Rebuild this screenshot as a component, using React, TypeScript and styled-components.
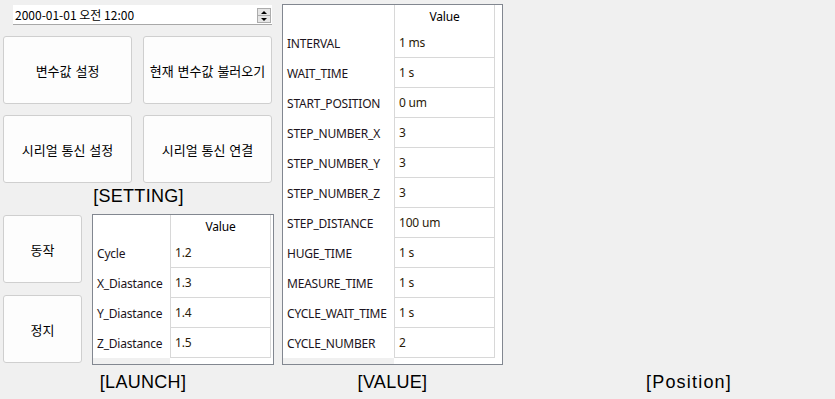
import styled, { createGlobalStyle } from 'styled-components'

const GlobalStyle = createGlobalStyle`
	html, body {
		margin: 0;
		padding: 0;
		background: #f0f0f0;
	}
	#root {
		width: 835px;
		height: 399px;
		overflow: hidden;
	}
`

interface Row {
	name: string
	value: string
}

const launchRows: Row[] = [
	{ name: 'Cycle', value: '1.2' },
	{ name: 'X_Diastance', value: '1.3' },
	{ name: 'Y_Diastance', value: '1.4' },
	{ name: 'Z_Diastance', value: '1.5' },
]

const valueRows: Row[] = [
	{ name: 'INTERVAL', value: '1 ms' },
	{ name: 'WAIT_TIME', value: '1 s' },
	{ name: 'START_POSITION', value: '0 um' },
	{ name: 'STEP_NUMBER_X', value: '3' },
	{ name: 'STEP_NUMBER_Y', value: '3' },
	{ name: 'STEP_NUMBER_Z', value: '3' },
	{ name: 'STEP_DISTANCE', value: '100 um' },
	{ name: 'HUGE_TIME', value: '1 s' },
	{ name: 'MEASURE_TIME', value: '1 s' },
	{ name: 'CYCLE_WAIT_TIME', value: '1 s' },
	{ name: 'CYCLE_NUMBER', value: '2' },
]

const Page = styled.div`
	display: flex;
	width: 835px;
	height: 399px;
	background: #f0f0f0;
`

const SettingColumn = styled.div`
	display: flex;
	flex-direction: column;
	width: 271px;
	margin-left: 3px;
`

const ValueColumn = styled.div`
	display: flex;
	flex-direction: column;
	width: 221px;
	margin-left: 8px;
	padding-top: 4px;
`

const PositionColumn = styled.div`
	flex: 1;
	display: flex;
	flex-direction: column;
	justify-content: flex-end;
	padding-left: 40px;
`

const DatePicker = styled.div`
	display: flex;
	align-items: center;
	justify-content: space-between;
	box-sizing: border-box;
	width: 259px;
	height: 20px;
	margin: 5px 0 0 10px;
	padding: 0 1px 0 2px;
	background: #fff;
	border-bottom: 1px solid #a8a8a8;
	font-family: 'Noto Sans CJK KR', sans-serif;
	font-size: 12px;
	color: #000;
`

const Spinner = styled.div`
	display: flex;
	flex-direction: column;
	width: 14px;
	height: 15px;
	margin-top: 2px;
`

const SpinButton = styled.div<{ $down?: boolean }>`
	flex: 1;
	display: flex;
	align-items: center;
	justify-content: center;
	box-sizing: border-box;
	background: #e6e6e6;
	border: 1px solid #acacac;
	border-top-width: ${p => (p.$down ? '0' : '1px')};

	&::after {
		content: '';
		border-left: 3px solid transparent;
		border-right: 3px solid transparent;
		${p =>
			p.$down
				? 'border-top: 3px solid #000;'
				: 'border-bottom: 3px solid #000;'}
	}
`

const ButtonGrid = styled.div`
	display: grid;
	grid-template-columns: 129px 129px;
	grid-auto-rows: 68px;
	column-gap: 11px;
	row-gap: 11px;
	margin-top: 11px;
`

const Button = styled.div`
	display: flex;
	align-items: center;
	justify-content: center;
	box-sizing: border-box;
	background: #fdfdfd;
	border: 1px solid #cfcfcf;
	border-radius: 3px;
	font-family: 'Noto Sans CJK KR', sans-serif;
	font-size: 13px;
	word-spacing: 1px;
	color: #000;
`

const SectionLabel = styled.div<{
	$height: number
	$line: number
	$shift?: number
	$spacing?: number
}>`
	height: ${p => p.$height}px;
	line-height: ${p => p.$line}px;
	padding-left: ${p => p.$shift ?? 0}px;
	text-align: center;
	font-family: 'Liberation Sans', Arial, sans-serif;
	font-size: 18px;
	letter-spacing: ${p => p.$spacing ?? 0.3}px;
	color: #000;
`

const LaunchRow = styled.div`
	display: flex;
	gap: 10px;
`

const LaunchButtons = styled.div`
	display: flex;
	flex-direction: column;
	gap: 12px;
	width: 79px;
	padding-top: 1px;

	${Button} {
		height: 68px;
	}
`

const Table = styled.div<{ $head: number; $rows: number; $width: number }>`
	display: grid;
	grid-template-columns: ${p => p.$head}px 101px 1fr;
	grid-template-rows: 23px repeat(${p => p.$rows}, 30px) 1fr;
	box-sizing: border-box;
	width: ${p => p.$width}px;
	height: ${p => 23 + p.$rows * 30 + 8}px;
	background: #fff;
	border: 1px solid #828790;
	font-family: 'Noto Sans', 'Segoe UI', sans-serif;
	font-size: 12px;
	letter-spacing: -0.2px;
`

const Cell = styled.div`
	display: flex;
	align-items: center;
	overflow: hidden;
	white-space: nowrap;
`

const HeadCorner = styled(Cell)`
	grid-column: 1;
`

const HeadValue = styled(Cell)`
	grid-column: 2;
	justify-content: center;
	border-left: 1px solid #d8d8d8;
	border-right: 1px solid #d8d8d8;
	color: #000;
`

const RowName = styled(Cell)`
	grid-column: 1;
	padding-left: 4px;
	color: #1c1420;
`

const RowValue = styled(Cell)`
	grid-column: 2;
	padding-left: 4px;
	border-left: 1px solid #d8d8d8;
	border-right: 1px solid #d8d8d8;
	border-bottom: 1px solid #d8d8d8;
	color: #2a1a08;
`

const EmptyCell = styled.div<{ $grey?: boolean }>`
	background: ${p => (p.$grey ? '#f0f0f0' : '#fff')};
`

interface GridProps {
	rows: Row[]
	head: number
	width: number
}

const ValueGrid = ({ rows, head, width }: GridProps) => (
	<Table $head={head} $rows={rows.length} $width={width}>
		<HeadCorner />
		<HeadValue>Value</HeadValue>
		<EmptyCell />
		{rows.flatMap(row => [
			<RowName key={row.name + '-n'}>{row.name}</RowName>,
			<RowValue key={row.name + '-v'}>{row.value}</RowValue>,
			<EmptyCell key={row.name + '-e'} />,
		])}
		<EmptyCell $grey />
		<EmptyCell />
		<EmptyCell />
	</Table>
)

export default function App() {
	return (
		<>
			<GlobalStyle />
			<Page>
				<SettingColumn>
					<DatePicker>
						<span>2000-01-01 오전 12:00</span>
						<Spinner>
							<SpinButton />
							<SpinButton $down />
						</Spinner>
					</DatePicker>
					<ButtonGrid>
						<Button>변수값 설정</Button>
						<Button>현재 변수값 불러오기</Button>
						<Button>시리얼 통신 설정</Button>
						<Button>시리얼 통신 연결</Button>
					</ButtonGrid>
					<SectionLabel $height={31} $line={26}>
						[SETTING]
					</SectionLabel>
					<LaunchRow>
						<LaunchButtons>
							<Button>동작</Button>
							<Button>정지</Button>
						</LaunchButtons>
						<ValueGrid rows={launchRows} head={77} width={182} />
					</LaunchRow>
					<SectionLabel $height={34} $line={34} $shift={9}>
						[LAUNCH]
					</SectionLabel>
				</SettingColumn>
				<ValueColumn>
					<ValueGrid rows={valueRows} head={111} width={221} />
					<SectionLabel $height={34} $line={34}>
						[VALUE]
					</SectionLabel>
				</ValueColumn>
				<PositionColumn>
					<SectionLabel $height={34} $line={34} $spacing={1.2}>
						[Position]
					</SectionLabel>
				</PositionColumn>
			</Page>
		</>
	)
}
